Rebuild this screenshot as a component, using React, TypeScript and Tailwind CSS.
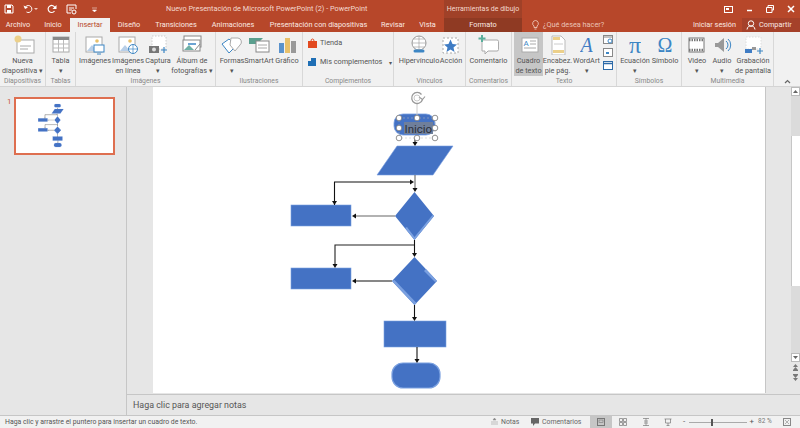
import React from "react";

const F = { fontFamily: 'Roboto,"Liberation Sans",sans-serif' };
const S = { fontFamily: '"Liberation Serif",serif' };
const B = "#3d86c4";

function I({ children, w = 24, h = 20 }: { children: React.ReactNode; w?: number; h?: number }) {
  return <svg width={w} height={h} viewBox={`0 0 ${w} ${h}`} className="block">{children}</svg>;
}

const icons: Record<string, React.ReactNode> = {
  nueva: <I><rect x="6" y="5" width="17" height="13" fill="#fff" stroke="#aaa" /><path d="M9 11h11M9 14h8" stroke="#aaa" /><circle cx="7" cy="4" r="3.5" fill="#ecd08a" /></I>,
  tabla: <I><rect x="4" y="2" width="16" height="15" fill="#fff" stroke="#aaa" /><rect x="4" y="2" width="16" height="3" fill="#888" /><path d="M4 9h16M4 13h16M9.5 5v12M14.5 5v12" stroke="#bbb" /></I>,
  img: <I><rect x="3" y="2" width="16" height="15" fill="#fff" stroke="#aaa" /><circle cx="14" cy="6" r="1.8" fill="#e8c06a" /><path d="M4 16l5-6 5 6z" fill="#b8cfe8" /><rect x="11" y="10" width="10" height="7" fill="#fff" stroke={B} /><path d="M14 19h4" stroke={B} /></I>,
  linea: <I><rect x="3" y="2" width="16" height="15" fill="#fff" stroke="#aaa" /><circle cx="14" cy="6" r="1.8" fill="#e8c06a" /><path d="M4 16l5-6 5 6z" fill="#b8cfe8" /><circle cx="17" cy="14" r="4.5" fill="#fff" stroke={B} /><path d="M12.5 14h9M17 9.5v9" stroke={B} strokeWidth=".7" /></I>,
  captura: <I><rect x="6" y="1" width="14" height="13" fill="#fff" stroke="#ccc" strokeDasharray="1.5 1.5" /><rect x="3" y="11" width="10" height="7" fill="#777" /><circle cx="8" cy="14.5" r="2" fill="#ddd" /><path d="M15 15h6M18 12v6" stroke={B} strokeWidth="1.2" /></I>,
  album: <I><rect x="4" y="1" width="17" height="11" fill="#fff" stroke="#888" /><path d="M5 11l5-5 5 5z" fill="#7ab5ad" /><rect x="3" y="5" width="17" height="11" fill="#fff" stroke="#888" /><path d="M4 15l5-5 5 5z" fill="#6fb0a5" /><path d="M8 9h8" stroke={B} strokeWidth="1.5" /><path d="M15 15l5-6" stroke="#888" /></I>,
  formas: <I w={26}><path d="M3 9l7-5 7 7-7 7z" fill="#fff" stroke={B} /><path d="M12 3h7a4 4 0 0 1 2 7l-5 6-5-6z" fill="#fff" stroke="#aaa" /></I>,
  smart: <I><path d="M2 3h14l-3 3 3 3H2z" fill="#5a9f8e" /><rect x="9" y="6" width="13" height="11" fill="#fff" stroke="#888" /><path d="M11 10h9M11 13h9" stroke="#aaa" /></I>,
  grafico: <I><rect x="4" y="8" width="5" height="10" fill="#5a92cc" /><rect x="10" y="3" width="5" height="15" fill="#e8c06a" /><rect x="16" y="6" width="5" height="12" fill="#999" /></I>,
  hiper: <I w={26}><circle cx="13" cy="8" r="7" fill="#fff" stroke="#999" /><path d="M6 8h14M13 1v14M8 4h10M8 12h10" stroke="#999" strokeWidth=".6" /><path d="M9 16h8" stroke={B} strokeWidth="3" strokeLinecap="round" /></I>,
  accion: <I><rect x="4" y="3" width="15" height="15" fill="#fff" stroke="#aaa" strokeDasharray="2 2" /><path d="M11.500 4.500l2 4.500 4.500.500-3.500 3 1 4.500-4-2.500-4 2.500 1-4.500-3.500-3 4.500-.500z" fill="#3f7cc4" /></I>,
  coment: <I><path d="M5 5h15a1.500 1.500 0 0 1 1.500 1.500v8A1.500 1.500 0 0 1 20 16h-9l-3 3v-3H5z" fill="#fff" stroke="#aaa" /><path d="M5 0v7M1.500 3.500h7" stroke="#5aaf9c" strokeWidth="2" /></I>,
  cuadro: <I><rect x="5" y="3" width="16" height="14" fill="#fff" stroke="#aaa" /><text x="6.500" y="11" fontSize="8" fill={B} style={F}>A</text><path d="M13 6h6M13 9h6M7 13h12" stroke="#aaa" /></I>,
  encab: <I><path d="M6 1h9l4 4v15H6z" fill="#fff" stroke="#bbb" /><rect x="7" y="2" width="7" height="3" fill="#ecd08a" /><rect x="7" y="15" width="11" height="3" fill="#ecd08a" /><path d="M8 9h9" stroke="#ccc" /></I>,
  wordart: <div style={S} className="h-[21px] leading-[21px] text-[20px] italic text-[#3f7cc4]">A</div>,
  pi: <div style={S} className="h-[21px] leading-[21px] text-[24px] text-[#3d86c4]">π</div>,
  omega: <div style={S} className="h-[21px] leading-[21px] text-[20px] text-[#3d86c4]">Ω</div>,
  video: <I w={20}><rect x="2" y="3" width="15" height="14" fill="#fff" stroke="#777" /><path d="M2 5h15M2 15h15" stroke="#777" strokeWidth="2.500" strokeDasharray="1.500 1" /></I>,
  audio: <I><path d="M5 8h3l6-5v14l-6-5H5z" fill="#999" /><path d="M16 6a5 5 0 0 1 0 8M18 4a8 8 0 0 1 0 12" stroke={B} fill="none" /></I>,
  graba: <I><rect x="5" y="2" width="15" height="12" fill="#fff" stroke="#ddd" strokeDasharray="1.500 1.500" /><rect x="4" y="14" width="7" height="4" fill="#3f7cc4" /><rect x="11" y="12" width="4" height="3" fill="#999" /><path d="M16 16h6M19 13v6" stroke={B} strokeWidth="1.200" /></I>,
};

type It = { k: string; lines: string[]; w: string; active?: boolean };
function Item({ k, lines, w, active }: It) {
  return (
    <div className={`${w} h-[44px] pt-[3px] flex flex-col items-center ${active ? "bg-[#c6c6c6]" : ""}`}>
      <div className="h-[21px] overflow-hidden flex justify-center">{icons[k]}</div>
      {lines.map((l, i) => (
        <div key={i} className="leading-[10px] whitespace-nowrap text-center text-[7.300px] text-[#555]">{l}</div>
      ))}
    </div>
  );
}

function Group({ w, label, pad, children }: { w: string; label: string; pad?: string; children: React.ReactNode }) {
  return (
    <div className={`${w} shrink-0 h-full flex flex-col border-r border-[#d8d8d8]`}>
      <div className={`h-[44px] flex ${pad ?? ""}`}>{children}</div>
      <div className="h-[10px] leading-[10px] text-center text-[6.800px] text-[#888] whitespace-nowrap">{label}</div>
    </div>
  );
}

function Shapes({ selected }: { selected?: boolean }) {
  const fill = "#4472c4";
  const hi = "#7aa0e0";
  const Arrow = ({ x, y, d }: { x: number; y: number; d: "d" | "l" | "r" }) => {
    const p = d === "d" ? `${x - 2.500},${y - 4} ${x + 2.500},${y - 4} ${x},${y}` : d === "l" ? `${x + 4},${y - 2.500} ${x + 4},${y + 2.500} ${x},${y}` : `${x - 4},${y - 2.500} ${x - 4},${y + 2.500} ${x},${y}`;
    return <polygon points={p} fill="#111" />;
  };
  return (
    <>
      <rect x="394" y="114" width="41" height="21" rx="9" fill={fill} stroke={hi} strokeWidth=".8" />
      <polygon points="397,146 453,146 433,175 377,175" fill={fill} stroke={hi} strokeWidth=".6" />
      <polygon points="414.500,192 434,216 414.500,240 395,216" fill={fill} />
      <path d="M405 228L414.500 240L434 216L432.500 215L414.500 237L407 227Z" fill={hi} />
      <rect x="291" y="205" width="60" height="21" fill={fill} stroke={hi} strokeWidth=".6" />
      <rect x="291" y="268" width="60" height="21" fill={fill} stroke={hi} strokeWidth=".6" />
      <polygon points="414.500,257 437,281 414.500,305 392,281" fill={fill} />
      <path d="M392 281L414.500 305L416.500 303L394.500 280Z" fill={hi} />
      <path d="M426 269L437 281L435 282L424 271Z" fill={hi} />
      <rect x="384" y="321" width="62" height="26" fill={fill} stroke={hi} strokeWidth=".6" />
      <rect x="392" y="363" width="48" height="25" rx="11" fill={fill} stroke={hi} strokeWidth="1.200" />
      <g fill="none" strokeWidth={selected ? 1.1 : 2}>
        <path d="M415 138V142" stroke="#111" />
        <path d="M415 175V188" stroke="#666" />
        <path d="M334.500 205V182H411" stroke="#111" />
        <path d="M395 216H356" stroke="#666" />
        <path d="M414.500 240V253" stroke="#111" />
        <path d="M335 265V245H414" stroke="#222" />
        <path d="M392 281H356" stroke="#111" />
        <path d="M414.500 305V317" stroke="#111" />
        <path d="M417 347V359" stroke="#111" />
      </g>
      <Arrow x={415} y={146} d="d" />
      <Arrow x={415} y={192} d="d" />
      <Arrow x={334.500} y={205} d="d" />
      <Arrow x={414} y={182} d="r" />
      <Arrow x={352} y={216} d="l" />
      <Arrow x={414.500} y={257} d="d" />
      <Arrow x={335} y={268} d="d" />
      <Arrow x={352} y={281} d="l" />
      <Arrow x={414.500} y={321} d="d" />
      <Arrow x={417} y={363} d="d" />
      {selected && (
        <>
          <rect x="404" y="122" width="29" height="12" fill="#6f7f9b" />
          <text x="404.500" y="133" fontSize="11.500" fill="#2a2f3a" style={F}>Inicio</text>
          <path d="M417 104V118" stroke="#ccc" />
          <path d="M399 118H435V138H399Z" fill="none" stroke="#bbb" strokeWidth=".5" strokeDasharray="2 2" />
          {[[399, 118], [417, 118], [435, 118], [399, 128], [435, 128], [399, 138], [417, 138], [435, 138]].map(([x, y]) => (
            <circle key={`${x}-${y}`} cx={x} cy={y} r="2.800" fill="#fff" stroke="#777" strokeWidth=".8" />
          ))}
          <path d="M421.500 94.500a5.500 5.500 0 1 0 1 5" fill="none" stroke="#999" strokeWidth="1.300" />
          <path d="M419 97l3.500 2.500 2.500-3" fill="none" stroke="#999" strokeWidth="1.100" />
          <circle cx="417" cy="98" r="3" fill="none" stroke="#bbb" strokeWidth=".8" />
        </>
      )}
    </>
  );
}

function Tab({ w, children, cls }: { w: string; children: React.ReactNode; cls?: string }) {
  return <div className={`${w} shrink-0 h-full flex items-center justify-center whitespace-nowrap ${cls ?? ""}`}>{children}</div>;
}

export default function App() {
  return (
    <div style={F} className="w-[800px] h-[428px] overflow-hidden flex flex-col bg-[#e6e6e6] text-[#444]">
      {/* title */}
      <div className="h-[18px] flex bg-[#b7472a] text-[#f4d9cf] text-[7.300px]">
        <div className="w-[166px] flex items-center pl-[4px] gap-[9px]">
          <svg width="10" height="10" viewBox="0 0 10 10"><path d="M1 1h7l1 1v7H1z" fill="none" stroke="#fff" /><rect x="3" y="1" width="4" height="3" fill="#fff" /><rect x="3" y="6" width="4" height="3" fill="#fff" /></svg>
          <svg width="15" height="10" viewBox="0 0 15 10"><path d="M2 4a3.500 3.500 0 1 1 1.500 4" fill="none" stroke="#fff" /><path d="M0.500 1.500L2 5l3-1.500z" fill="#fff" /><path d="M11 4h4l-2 2z" fill="#f0c9bb" /></svg>
          <svg width="10" height="10" viewBox="0 0 10 10"><path d="M8 4a3.500 3.500 0 1 0-.500 3" fill="none" stroke="#fff" strokeWidth="1.200" /><path d="M9.500 1v4h-4z" fill="#fff" /></svg>
          <svg width="12" height="11" viewBox="0 0 12 11"><path d="M1 1h9v4M1 1v8h4M3 4h5M3 6h3" fill="none" stroke="#fff" /><circle cx="8" cy="8" r="2" fill="none" stroke="#fff" /></svg>
          <svg width="7" height="7" viewBox="0 0 7 7" className="ml-[4px]"><path d="M1 2h5M1.500 4h4L3.500 6z" fill="#fff" stroke="#fff" strokeWidth=".5" /></svg>
        </div>
        <div className="w-[278px] flex items-center pt-[1px] whitespace-nowrap">Nuevo Presentación de Microsoft PowerPoint (2) - PowerPoint</div>
        <div className="w-[78px] bg-[#a04128] flex items-center justify-center whitespace-nowrap text-[7px]">Herramientas de dibujo</div>
        <div className="flex-1 flex items-center justify-end gap-[13px] pr-[5px] text-white">
          <svg width="9" height="7" viewBox="0 0 9 7"><rect x=".5" y=".5" width="8" height="6" fill="none" stroke="#fff" /><rect x="2" y="2" width="3" height="2" fill="#fff" /></svg>
          <svg width="7" height="7" viewBox="0 0 7 7"><path d="M1 4.500h5" stroke="#fff" strokeWidth="1.500" /></svg>
          <svg width="8" height="8" viewBox="0 0 8 8"><path d="M2 2V.5h5.500V5H6M.5 2.500H6V7.500H.5z" fill="none" stroke="#fff" /></svg>
          <svg width="8" height="8" viewBox="0 0 8 8"><path d="M1 1l6 6M7 1L1 7" stroke="#fff" strokeWidth="1.500" /></svg>
        </div>
      </div>
      {/* tabs */}
      <div className="h-[14px] flex bg-[#b7472a] text-[#fbe9e3] text-[7.300px]">
        <Tab w="w-[36px]">Archivo</Tab>
        <Tab w="w-[34px]">Inicio</Tab>
        <Tab w="w-[40px]" cls="bg-[#f1f1f1] text-[#b7472a]">Insertar</Tab>
        <Tab w="w-[38px]">Diseño</Tab>
        <Tab w="w-[56px]">Transiciones</Tab>
        <Tab w="w-[58px]">Animaciones</Tab>
        <Tab w="w-[113px]">Presentación con diapositivas</Tab>
        <Tab w="w-[36px]">Revisar</Tab>
        <Tab w="w-[33px]">Vista</Tab>
        <Tab w="w-[78px]" cls="bg-[#8f3a23]">Formato</Tab>
        <div className="ml-[10px] h-full flex items-center gap-[4px] text-[#eac3b6]">
          <svg width="7" height="10" viewBox="0 0 7 10"><path d="M3.500.5a3 3 0 0 1 1.500 5.500V7.500H2V6A3 3 0 0 1 3.500.5zM2.500 9h2" fill="none" stroke="#f2d5ca" strokeWidth=".8" /></svg>
          ¿Qué desea hacer?
        </div>
        <div className="flex-1" />
        <div className="h-full flex items-center pr-[6px]">Iniciar sesión</div>
        <div className="w-[58px] h-full bg-[#a5412a] flex items-center pl-[4px] gap-[3px]">
          <svg width="10" height="10" viewBox="0 0 10 10"><circle cx="5" cy="3.500" r="2.700" fill="none" stroke="#fff" /><path d="M1 9.500c.5-3 2-3.500 4-3.500s3.500.5 4 3.500" fill="none" stroke="#fff" /></svg>
          Compartir
        </div>
      </div>
      {/* ribbon */}
      <div className="h-[55px] flex bg-[#f1f1f1] border-b border-[#d4d4d4]">
        <Group w="w-[46px]" label="Diapositivas"><Item k="nueva" lines={["Nueva", "diapositiva ▾"]} w="w-[46px]" /></Group>
        <Group w="w-[30px]" label="Tablas"><Item k="tabla" lines={["Tabla", "▾"]} w="w-[30px]" /></Group>
        <Group w="w-[140px]" label="Imágenes">
          <Item k="img" lines={["Imágenes"]} w="w-[38px]" />
          <Item k="linea" lines={["Imágenes", "en línea"]} w="w-[28px]" />
          <Item k="captura" lines={["Captura", "▾"]} w="w-[32px]" />
          <Item k="album" lines={["Álbum de", "fotografías ▾"]} w="w-[36px]" />
        </Group>
        <Group w="w-[87px]" label="Ilustraciones" pad="pl-[4px]">
          <Item k="formas" lines={["Formas", "▾"]} w="w-[24px]" />
          <Item k="smart" lines={["SmartArt"]} w="w-[30px]" />
          <Item k="grafico" lines={["Gráfico"]} w="w-[26px]" />
        </Group>
        <Group w="w-[91px]" label="Complementos">
          <div className="flex flex-col pl-[5px] pt-[5px] gap-[7px] text-[7.300px] text-[#555] whitespace-nowrap">
            <div className="flex items-center gap-[3px] h-[12px]">
              <svg width="9" height="10" viewBox="0 0 9 10"><rect y="3" width="9" height="7" fill="#e2491f" /><path d="M3 3a1.500 2 0 0 1 3 0" fill="none" stroke="#e2491f" /></svg>Tienda
            </div>
            <div className="flex items-center gap-[3px] h-[12px]">
              <svg width="9" height="10" viewBox="0 0 9 10"><rect x="3" y="1" width="5" height="4" fill="#1f6fb5" /><rect y="4" width="8" height="5" fill="#1f6fb5" /></svg>Mis complementos<span className="ml-[4px] text-[6px]">▾</span>
            </div>
          </div>
        </Group>
        <Group w="w-[72px]" label="Vínculos" pad="pl-[4px]">
          <Item k="hiper" lines={["Hipervínculo"]} w="w-[42px]" />
          <Item k="accion" lines={["Acción"]} w="w-[22px]" />
        </Group>
        <Group w="w-[46px]" label="Comentarios"><Item k="coment" lines={["Comentario"]} w="w-[46px]" /></Group>
        <Group w="w-[105px]" label="Texto" pad="pl-[2px]">
          <Item k="cuadro" lines={["Cuadro", "de texto"]} w="w-[29px]" active />
          <Item k="encab" lines={["Encabez.", "pie pág."]} w="w-[29px]" />
          <Item k="wordart" lines={["WordArt", "▾"]} w="w-[29px]" />
          <div className="w-[14px] pt-[3px] flex flex-col items-center gap-[4px]">
            <svg width="10" height="9" viewBox="0 0 10 9"><rect x=".5" y=".5" width="9" height="8" fill="#fff" stroke="#888" /><path d="M.5 2h9" stroke="#888" /><circle cx="7" cy="6" r="2" fill="#fff" stroke={B} /></svg>
            <svg width="10" height="9" viewBox="0 0 10 9"><rect x=".5" y=".5" width="9" height="8" fill="#fff" stroke="#888" /><rect x="3" y="4" width="3" height="2" fill={B} /></svg>
            <svg width="10" height="9" viewBox="0 0 10 9"><rect x=".5" y=".5" width="9" height="8" fill="#fff" stroke="#2f6ba8" /><path d="M.5 2.500h9" stroke="#2f6ba8" strokeWidth="1.500" /></svg>
          </div>
        </Group>
        <Group w="w-[65px]" label="Símbolos" pad="pl-[3px]">
          <Item k="pi" lines={["Ecuación", "▾"]} w="w-[30px]" />
          <Item k="omega" lines={["Símbolo"]} w="w-[30px]" />
        </Group>
        <Group w="w-[92px]" label="Multimedia" pad="pl-[3px]">
          <Item k="video" lines={["Video", "▾"]} w="w-[24px]" />
          <Item k="audio" lines={["Audio", "▾"]} w="w-[26px]" />
          <Item k="graba" lines={["Grabación", "de pantalla"]} w="w-[36px]" />
        </Group>
        <div className="flex-1 flex items-end justify-center pb-[2px]">
          <svg width="7" height="5" viewBox="0 0 7 5"><path d="M1 4l2.500-2.500L6 4" fill="none" stroke="#666" strokeWidth="1.200" /></svg>
        </div>
      </div>
      {/* body */}
      <div className="flex-1 min-h-0 flex">
        <div className="w-[127px] shrink-0 border-r border-[#c6c6c6] flex items-start pt-[10px]">
          <div className="w-[14px] pl-[7px] text-[8px] leading-[10px] text-[#c9593a]">1</div>
          <div className="w-[101px] h-[58px] border-2 border-[#de6f50] bg-white">
            <svg width="97" height="54" viewBox="153 82 612 344" className="block"><Shapes /></svg>
          </div>
        </div>
        <div className="flex-1 flex flex-col min-w-0">
          <div className="h-[308px] flex border-b border-[#c6c6c6]">
            <div className="w-[26px] shrink-0" />
            <div className="w-[613px] h-[306px] shrink-0 bg-white border-r border-[#c6c6c6]">
              <svg width="612" height="306" viewBox="153 87 612 306" className="block"><Shapes selected /></svg>
            </div>
            <div className="flex-1" />
            <div className="w-[9px] shrink-0 flex flex-col">
              <div className="h-[9px] bg-white border border-[#bbb] flex items-center justify-center">
                <svg width="5" height="3" viewBox="0 0 5 3"><path d="M2.500 0L5 3H0z" fill="#666" /></svg>
              </div>
              <div className="h-[40px] bg-[#dbdbdb]" />
              <div className="h-[150px] bg-white border-l border-[#c6c6c6]" />
              <div className="h-[67px] bg-[#dbdbdb]" />
              <div className="h-[9px] bg-white border border-[#bbb] flex items-center justify-center">
                <svg width="5" height="3" viewBox="0 0 5 3"><path d="M2.500 3L5 0H0z" fill="#666" /></svg>
              </div>
              <div className="h-[10px] flex items-center justify-center">
                <svg width="7" height="7" viewBox="0 0 7 7"><path d="M3.500 0L6 3H1zM3.500 3L6 6H1z" fill="#777" /><path d="M1 6.500h5" stroke="#777" /></svg>
              </div>
              <div className="h-[10px] flex items-center justify-center">
                <svg width="7" height="7" viewBox="0 0 7 7"><path d="M3.500 7L6 4H1zM3.500 4L6 1H1z" fill="#777" /><path d="M1 .5h5" stroke="#777" /></svg>
              </div>
            </div>
          </div>
          <div className="flex-1 flex items-center pl-[6px] pt-[1px] text-[8.900px] text-[#555]">Haga clic para agregar notas</div>
        </div>
      </div>
      {/* status */}
      <div className="h-[13px] flex items-center bg-[#f1f1f1] border-t border-[#c6c6c6] text-[6.900px] text-[#555] whitespace-nowrap">
        <div className="w-[491px] pl-[5px]">Haga clic y arrastre el puntero para insertar un cuadro de texto.</div>
        <div className="w-[40px] flex items-center gap-[3px] text-[#666]">
          <svg width="7" height="7" viewBox="0 0 7 7"><path d="M3.500 0L5 2H2zM0 4h7M0 6h7" fill="#888" stroke="#888" strokeWidth=".5" /></svg>Notas
        </div>
        <div className="w-[59px] flex items-center gap-[3px] text-[#666]">
          <svg width="8" height="8" viewBox="0 0 8 8"><path d="M0 0h8v5.500H4L2 8V5.500H0z" fill="#666" /></svg>Comentarios
        </div>
        <div className="w-[22px] h-full bg-[#c6c6c6] flex items-center justify-center">
          <svg width="8" height="8" viewBox="0 0 8 8"><rect x=".5" y=".5" width="7" height="7" fill="none" stroke="#777" /><rect x="2" y="2" width="4" height="2.500" fill="none" stroke="#777" strokeWidth=".6" /></svg>
        </div>
        <div className="w-[22px] flex justify-center">
          <svg width="8" height="8" viewBox="0 0 8 8"><path d="M.5.5h3v3h-3zM4.500.5h3v3h-3zM.5 4.500h3v3h-3zM4.500 4.500h3v3h-3z" fill="none" stroke="#777" strokeWidth=".7" /></svg>
        </div>
        <div className="w-[23px] flex justify-center">
          <svg width="8" height="8" viewBox="0 0 8 8"><path d="M1 .5h6M1 7.500h6M4 0v8M2 3h4M2 5h4" stroke="#888" strokeWidth=".8" /></svg>
        </div>
        <div className="w-[22px] flex justify-center">
          <svg width="8" height="8" viewBox="0 0 8 8"><path d="M.5 1h7M1.500 1v4h5V1M4 5v2.500M2.500 7.500h3" fill="none" stroke="#777" strokeWidth=".7" /></svg>
        </div>
        <div className="w-[4px]" />
        <div className="w-[71px] flex items-center gap-[2px]">
          <span className="text-[8px] leading-[8px] w-[4px]">-</span>
          <div className="relative w-[60px] h-px bg-[#aaa]">
            <div className="absolute left-[22px] -top-[3px] w-[2px] h-[7px] bg-[#555]" />
          </div>
          <span className="text-[8px] leading-[8px]">+</span>
        </div>
        <div className="w-[26px] text-[6.500px] text-[#777] pl-[4px]">82 %</div>
        <svg width="8" height="8" viewBox="0 0 8 8" className="ml-[3px]"><rect x=".5" y=".5" width="7" height="7" fill="none" stroke="#888" /><path d="M2 2l4 4M6 2L2 6" stroke="#888" strokeWidth=".6" /></svg>
      </div>
    </div>
  );
}
